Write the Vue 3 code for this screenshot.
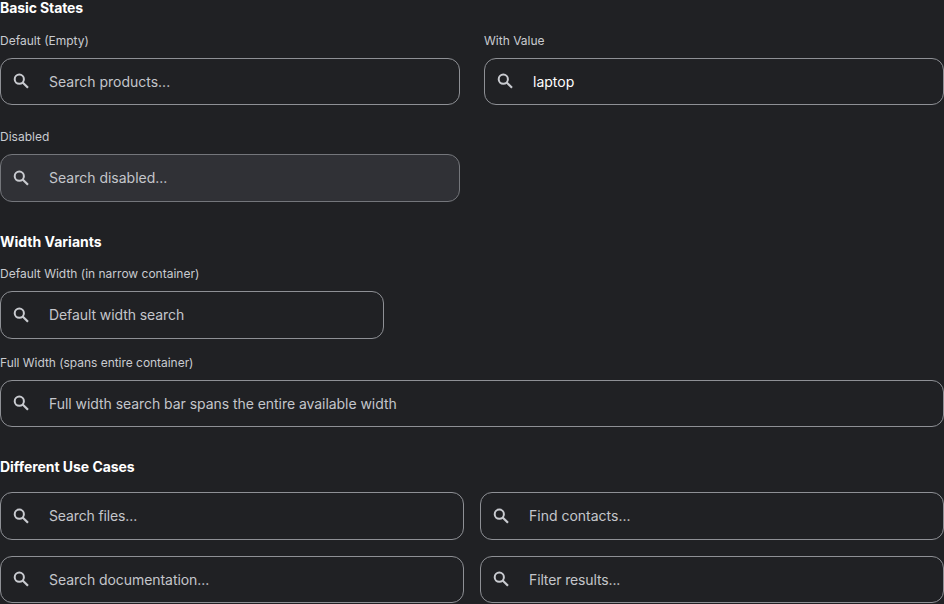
<script setup>
import { ref, h } from 'vue'

// `track` is the letter spacing of the text, in pixels
const basic = ref([
  { label: 'Default (Empty)', placeholder: 'Search products...', value: '' },
  { label: 'With Value', placeholder: 'Search products...', value: 'laptop' },
  { label: 'Disabled', placeholder: 'Search disabled...', value: '', disabled: true },
])
const widths = ref([
  { label: 'Default Width (in narrow container)', placeholder: 'Default width search', value: '', narrow: true, track: -0.08 },
  { label: 'Full Width (spans entire container)', placeholder: 'Full width search bar spans the entire available width', value: '', track: -0.05, labelTrack: -0.035 },
])
const useCases = ref([
  { placeholder: 'Search files...', value: '', track: -0.13 },
  { placeholder: 'Find contacts...', value: '' },
  { placeholder: 'Search documentation...', value: '', track: -0.06 },
  { placeholder: 'Filter results...', value: '', track: -0.13 },
])

const spacing = (px) => ({ letterSpacing: `${px || 0}px` })

const SearchBar = ({ field }) =>
  h('div', { class: ['search', { 'is-disabled': field.disabled }] }, [
    h('svg', { class: 'search-icon', viewBox: '0 0 20 20', 'aria-hidden': 'true' }, [
      h('circle', { cx: 8.3, cy: 8.2, r: 4.6, 'stroke-width': 2 }),
      h('path', { d: 'M11.4 11.3 17 16.7', 'stroke-width': 2.2 }),
    ]),
    h('input', {
      class: 'search-input',
      type: 'text',
      placeholder: field.placeholder,
      value: field.value,
      disabled: field.disabled,
      style: spacing(field.track),
      onInput: (e) => { field.value = e.target.value },
    }),
  ])
SearchBar.props = ['field']
</script>

<template>
  <main class="page">
    <section>
      <h3 class="title" :style="spacing(-0.1)">Basic States</h3>
      <div class="grid states">
        <div v-for="f in basic" :key="f.label">
          <p class="label">{{ f.label }}</p>
          <SearchBar :field="f" />
        </div>
      </div>
    </section>
    <section>
      <h3 class="title">Width Variants</h3>
      <div class="stack">
        <div v-for="f in widths" :key="f.label" :class="{ narrow: f.narrow }">
          <p class="label" :style="spacing(f.labelTrack)">{{ f.label }}</p>
          <SearchBar :field="f" />
        </div>
      </div>
    </section>
    <section>
      <h3 class="title" :style="spacing(-0.05)">Different Use Cases</h3>
      <div class="grid cases">
        <SearchBar v-for="f in useCases" :key="f.placeholder" :field="f" />
      </div>
    </section>
  </main>
</template>

<style>
html,
body {
  background: #202124;
}
body {
  margin: 0;
  overflow: hidden;
}
</style>

<style scoped>
.page {
  display: flex;
  flex-direction: column;
  gap: 32px;
  font-family: Inter, sans-serif;
  color: #fff;
}
.title {
  margin: 0 0 16px;
  font-size: 14px;
  line-height: 16.8px;
  font-weight: 700;
}
.label {
  margin: 0 0 8px;
  font-size: 12px;
  line-height: 16.8px;
  color: #c9cbd0;
}
.grid {
  display: grid;
  grid-template-columns: 1fr 1fr;
}
.states {
  gap: 24px;
}
.cases {
  gap: 16px;
}
.stack {
  display: flex;
  flex-direction: column;
  gap: 16px;
}
.narrow {
  width: 384px;
}
.page :deep(.search) {
  box-sizing: border-box;
  display: flex;
  align-items: center;
  height: 47.6px;
  padding: 0 16px 0 10px;
  border: 1px solid #8e9095;
  border-radius: 12px;
}
.page :deep(.search.is-disabled) {
  background: #303136;
  border-color: #74767b;
}
.page :deep(.search-icon) {
  flex: none;
  width: 20px;
  height: 20px;
  margin-right: 18px;
  fill: none;
  stroke: #c9cbd0;
}
.page :deep(.search-input) {
  flex: 1;
  min-width: 0;
  height: 19.6px;
  margin: 0;
  padding: 0;
  border: 0;
  outline: 0;
  background: transparent;
  font: 400 14px/19.6px Inter, sans-serif;
  color: #fff;
}
.page :deep(.search-input::placeholder) {
  color: #c4c6cb;
  opacity: 1;
}
</style>
